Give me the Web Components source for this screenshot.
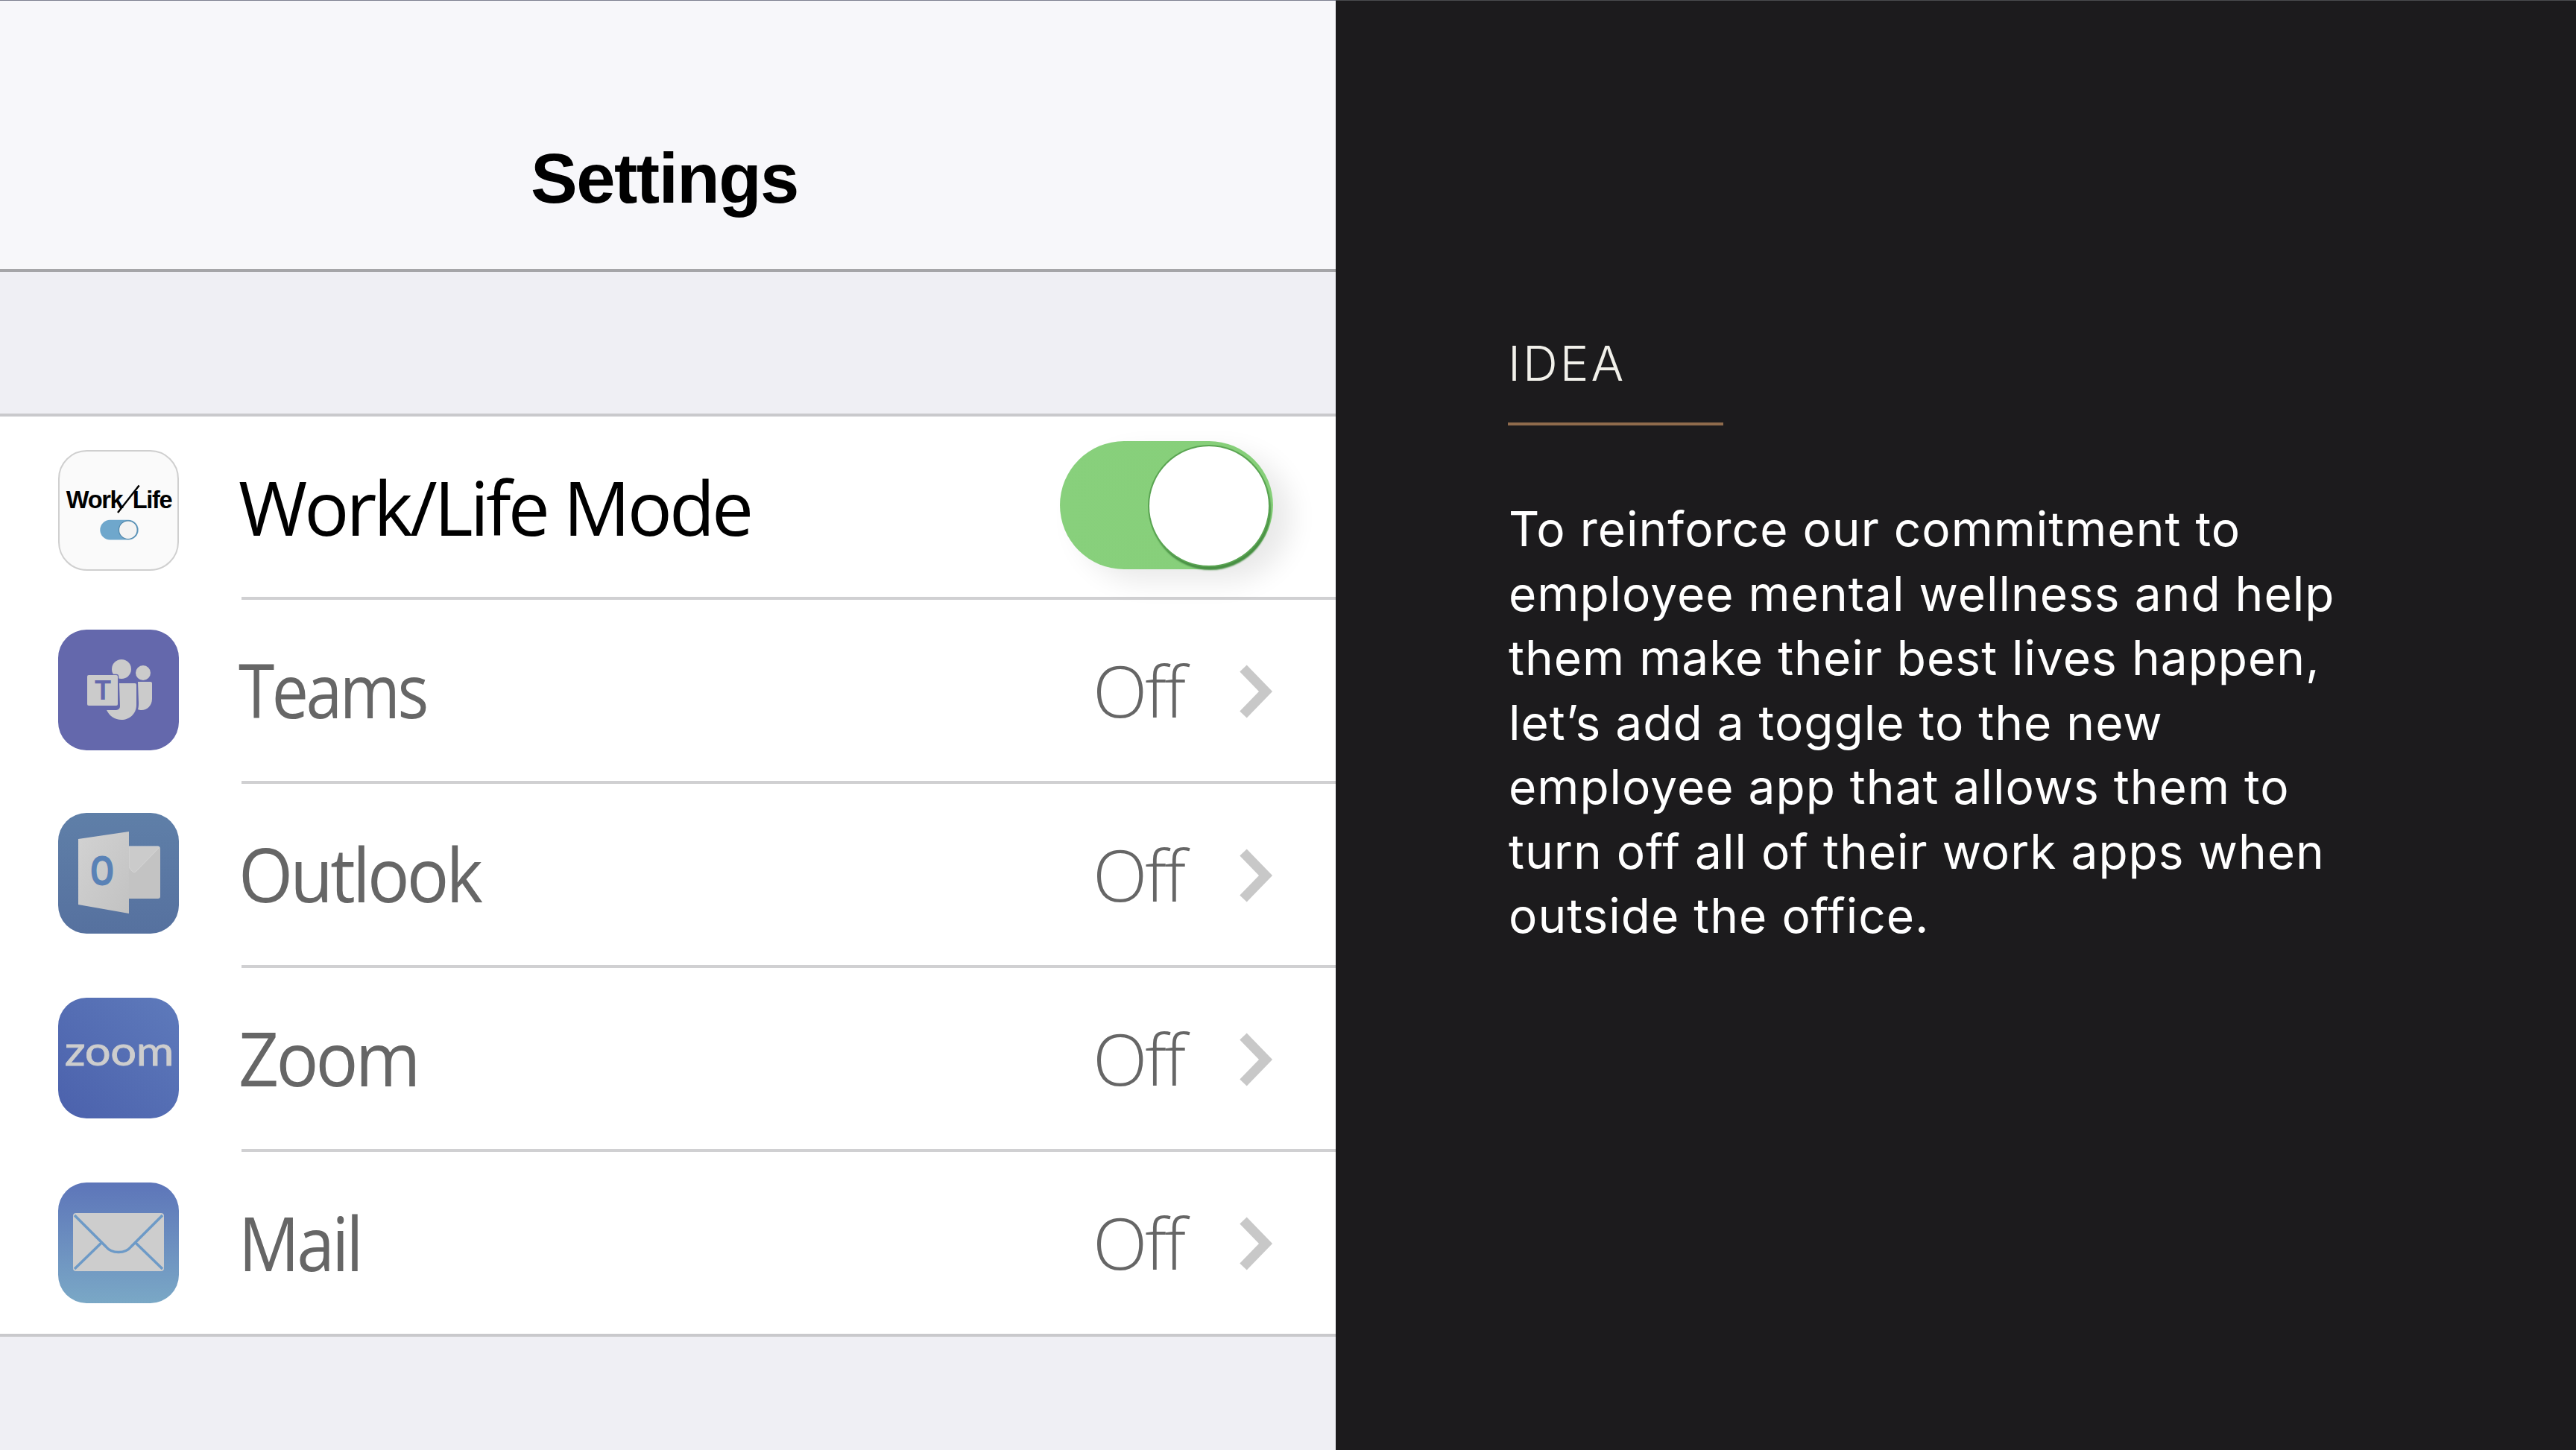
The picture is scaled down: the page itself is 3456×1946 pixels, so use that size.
<!DOCTYPE html>
<html>
<head>
<meta charset="utf-8">
<title>Work/Life Mode</title>
<style>
  html, body { margin: 0; padding: 0; background: #1c1b1d; }
  body { width: 3456px; height: 1946px; overflow: hidden; }
  slide-view { height: 1946px; }
</style>
</head>
<body>
<slide-view>
  <settings-panel slot="left">
    <settings-row label="Work/Life Mode" kind="toggle" icon="worklife" squeeze="1" nudge="5"></settings-row>
    <settings-row label="Teams" value="Off" icon="teams" squeeze=".877" nudge="-6"></settings-row>
    <settings-row label="Outlook" value="Off" icon="outlook" squeeze=".94" nudge="-8"></settings-row>
    <settings-row label="Zoom" value="Off" icon="zoom" squeeze=".947" nudge="-6"></settings-row>
    <settings-row label="Mail" value="Off" icon="mail" squeeze=".91" nudge="0" last></settings-row>
  </settings-panel>
  <idea-panel slot="right" heading="IDEA">To reinforce our commitment to<br>employee mental wellness and help<br>them make their best lives happen,<br>let’s add a toggle to the new<br>employee app that allows them to<br>turn off all of their work apps when<br>outside the office.</idea-panel>
</slide-view>

<script>
const ICONS = {
  worklife: `
    <svg viewBox="0 0 164 164" width="164" height="164">
      <rect x="1" y="1" width="162" height="162" rx="38" fill="#fafafa" stroke="#cfcfcf" stroke-width="2"/>
      <text x="11" y="79" font-family="'Liberation Sans', sans-serif" font-size="33" font-weight="700" letter-spacing="-1.4" fill="#000">Work</text>
      <text x="101" y="79" font-family="'Liberation Sans', sans-serif" font-size="33" font-weight="700" letter-spacing="-1.4" fill="#000">Life</text>
      <line x1="81" y1="85" x2="110" y2="48" stroke="#000" stroke-width="2.5"/>
      <rect x="57" y="95" width="52" height="27" rx="13.5" fill="#6fa7cc"/>
      <circle cx="95" cy="108.5" r="12.5" fill="#f3f3f3" stroke="#4f86aa" stroke-width="1.2"/>
    </svg>`,
  teams: `
    <svg viewBox="0 0 162 162" width="162" height="162">
      <rect width="162" height="162" rx="38" fill="#6468ac"/>
      <circle cx="85" cy="53" r="13" fill="#cbcbcb"/>
      <circle cx="114" cy="58" r="10" fill="#cbcbcb"/>
      <path d="M107 70h17a2 2 0 0 1 2 2v21c0 9-7 15-14 15-2 0-4-.4-5-1 1-3 1-6 1-9z" fill="#cbcbcb"/>
      <path d="M82 72h21a2 2 0 0 1 2 2v27c0 12-9 20-20 20-9 0-16-5-20-13h13a5 5 0 0 0 5-5z" fill="#cbcbcb"/>
      <rect x="39" y="61" width="41" height="41" rx="2" fill="#cbcbcb" stroke="#6468ac" stroke-width="2.5" paint-order="stroke"/>
      <text x="60" y="94" text-anchor="middle" font-family="'Liberation Sans', sans-serif" font-size="36" font-weight="700" fill="#6468ac">T</text>
    </svg>`,
  outlook: `
    <svg viewBox="0 0 162 162" width="162" height="162">
      <defs>
        <linearGradient id="ob" x1="0" y1="0" x2="0" y2="1"><stop offset="0" stop-color="#5f7fa8"/><stop offset="1" stop-color="#56719f"/></linearGradient>
        <linearGradient id="op" x1="0" y1="0" x2="1" y2="1"><stop offset="0" stop-color="#d2d2d2"/><stop offset="1" stop-color="#c2c2c2"/></linearGradient>
      </defs>
      <rect width="162" height="162" rx="38" fill="url(#ob)"/>
      <path d="M95 45h39a3 3 0 0 1 3 3v64a3 3 0 0 1-3 3H95z" fill="#c3c3c3"/>
      <path d="M95 45h39a3 3 0 0 1 2 1l-31 32c-2 2-4 2-6 0l-4-5z" fill="#cbcbcb" stroke="#d6d6d6" stroke-width="1"/>
      <path d="M27 35L95 25V135L27 123z" fill="url(#op)"/>
      <text transform="translate(59,97) scale(.78,1)" text-anchor="middle" font-family="'Open Sans', sans-serif" font-size="54" font-weight="700" fill="#5a82b6">O</text>
    </svg>`,
  zoom: `
    <svg viewBox="0 0 162 162" width="162" height="162">
      <defs><linearGradient id="zb" x1="0" y1="1" x2="1" y2="0"><stop offset="0" stop-color="#4b61ac"/><stop offset="1" stop-color="#5e7abb"/></linearGradient></defs>
      <rect width="162" height="162" rx="38" fill="url(#zb)"/>
      <text transform="translate(82,91) scale(1.12,1)" text-anchor="middle" font-family="'Lato', sans-serif" font-size="55" font-weight="400" letter-spacing="-.3" stroke="#cdcdcd" stroke-width=".8" fill="#cdcdcd">zoom</text>
    </svg>`,
  mail: `
    <svg viewBox="0 0 162 162" width="162" height="162">
      <defs><linearGradient id="mb" x1="0" y1="0" x2="0" y2="1"><stop offset="0" stop-color="#5d75b9"/><stop offset="1" stop-color="#7aa8c6"/></linearGradient></defs>
      <rect width="162" height="162" rx="38" fill="url(#mb)"/>
      <rect x="20" y="41" width="122" height="78" rx="4" fill="#cdcdcd"/>
      <path d="M22 44L64 86C72 96 90 96 98 86L140 44M22 116L58 81M140 116L104 81" fill="none" stroke="#6d9ac7" stroke-width="3.5"/>
    </svg>`
};

class SettingsPanel extends HTMLElement {
  constructor() {
    super();
    this.attachShadow({mode: 'open'}).innerHTML = `
      <style>
        :host { display: flex; flex-direction: column; width: 1792px; height: 1946px; background: #efeff4; font-family: "Open Sans", sans-serif; }
        header {
          height: 365px; flex: none; box-sizing: border-box; padding: 192px 9px 0 0; text-align: center;
          background: #f7f7fa; border-top: 1px solid #7d8090; border-bottom: 4px solid #a5a5a8;
        }
        h1 { margin: 0; font: 700 94px/1 "Liberation Sans", sans-serif; letter-spacing: -1.5px; color: #000; }
        .spacer { height: 194px; flex: none; border-bottom: 4px solid #c9c9cc; box-sizing: border-box; }
        .rows { background: #fff; border-bottom: 4px solid #c9c9cc; }
      </style>
      <header><h1>Settings</h1></header>
      <div class="spacer"></div>
      <div class="rows"><slot></slot></div>`;
  }
}

class SettingsRow extends HTMLElement {
  constructor() {
    super();
    const kind = this.getAttribute('kind');
    const toggle = `<ios-toggle></ios-toggle>`;
    const value = `<span class="value">${this.getAttribute('value') || ''}</span>
      <svg class="chev" width="48" height="72" viewBox="0 0 48 72"><path d="M8 5L38 36L8 67" fill="none" stroke="#c8c8c8" stroke-width="13"/></svg>`;
    this.attachShadow({mode: 'open'}).innerHTML = `
      <style>
        :host { display: block; height: 247px; box-sizing: border-box; --shift: -3px; }
        :host([kind="toggle"]) { --label: #000; --shift: 0px; height: 246px; }
        :host([last]) { height: 244px; }
        .row { display: flex; align-items: center; height: 100%; box-sizing: border-box; padding-left: 78px; padding-right: 84px; }
        .icon { width: 162px; height: 162px; flex: none; display: flex; align-items: center; justify-content: center; margin-top: ${this.getAttribute('nudge')}px; }
        .body { flex: 1; display: flex; align-items: center; align-self: stretch; margin-left: 84px; margin-right: -84px; padding-right: 84px; border-bottom: 4px solid #d0d0d2; }
        :host([last]) .body { border-bottom: 0; }
        .cell { flex: 1; margin-left: -4px; margin-top: var(--shift); }
        .label { display: inline-block; font-size: 100px; letter-spacing: -4px; color: var(--label, #666); transform: scaleX(${this.getAttribute('squeeze')}); transform-origin: left center; }
        .value { font-size: 96px; font-weight: 300; letter-spacing: -3px; color: #666; margin-right: 72px; margin-top: -3px; }
        .chev { flex: none; margin-top: 2px; }
        ios-toggle { margin-top: -4px; }
      </style>
      <div class="row">
        <div class="icon">${ICONS[this.getAttribute('icon')]}</div>
        <div class="body">
          <div class="cell"><span class="label">${this.getAttribute('label')}</span></div>
          ${kind === 'toggle' ? toggle : value}
        </div>
      </div>`;
  }
}

class IosToggle extends HTMLElement {
  constructor() {
    super();
    this.attachShadow({mode: 'open'}).innerHTML = `
      <style>
        :host { display: block; position: relative; width: 286px; height: 172px; border-radius: 86px; background: linear-gradient(90deg, #88d07c, #86cf79); box-shadow: 24px 16px 36px rgba(0,0,0,.09); }
        .knob {
          position: absolute; right: 6px; top: 7px; width: 160px; height: 160px;
          border-radius: 50%; background: #fff; box-shadow: 0 0 0 2px #5aa452, 2px 5px 2px 1px #488f44;
        }
      </style>
      <div class="knob"></div>`;
  }
}

class IdeaPanel extends HTMLElement {
  constructor() {
    super();
    this.attachShadow({mode: 'open'}).innerHTML = `
      <style>
        :host { display: block; width: 1664px; height: 1946px; box-sizing: border-box; padding: 451px 0 0 225px; background: #1c1b1d; border-top: 1px solid #4a4b4f; font-family: Inter, sans-serif; }
        h2 { margin: 0 0 0 6px; font-size: 65px; line-height: 72px; font-weight: 350; color: #f1f0ea; letter-spacing: 3px; }
        .rule { width: 289px; height: 4px; margin: 43px 0 96px 6px; background: #8f6b4c; }
        p { margin: 0 0 0 7px; font-size: 64px; line-height: 86.5px; font-weight: 400; color: #fff; letter-spacing: 1px; white-space: nowrap; }
      </style>
      <h2>${this.getAttribute('heading')}</h2>
      <div class="rule"></div>
      <p><slot></slot></p>`;
  }
}

class SlideView extends HTMLElement {
  constructor() {
    super();
    this.attachShadow({mode: 'open'}).innerHTML = `
      <style>:host { display: flex; width: 3456px; height: 1946px; }</style>
      <slot name="left"></slot><slot name="right"></slot>`;
  }
}

customElements.define('ios-toggle', IosToggle);
customElements.define('settings-row', SettingsRow);
customElements.define('settings-panel', SettingsPanel);
customElements.define('idea-panel', IdeaPanel);
customElements.define('slide-view', SlideView);
</script>
</body>
</html>
